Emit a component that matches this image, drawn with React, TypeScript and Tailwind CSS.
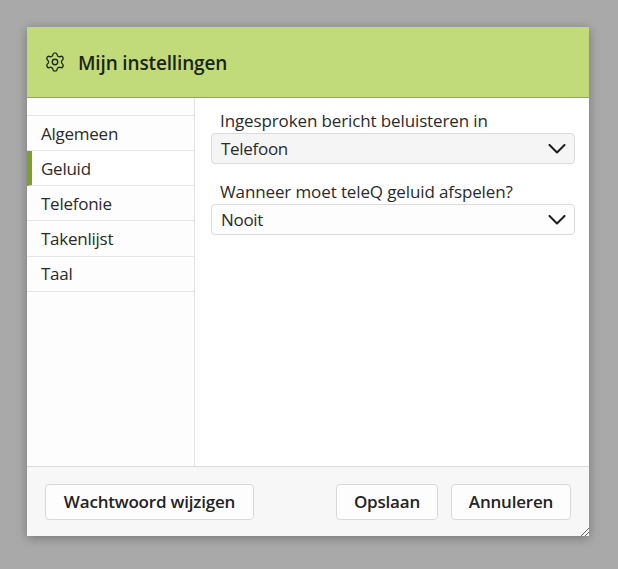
import React from 'react';
import { Settings } from 'lucide-react';

const tabs = ['Algemeen', 'Geluid', 'Telefonie', 'Takenlijst', 'Taal'];

function Field({ label, value, shaded }: { label: string; value: string; shaded?: boolean }) {
  return (
    <div>
      <div className="pl-[9px] h-[24px] leading-[24px] text-[17px] tracking-[-0.12px] text-[#2b2b2b]">{label}</div>
      <div
        className={`h-[31px] rounded-[4px] border border-[#dcdcdc] pl-[9px] pr-[8px] flex items-center justify-between text-[17px] tracking-[-0.3px] text-[#2b2b2b] ${
          shaded ? 'bg-[#f5f5f5]' : 'bg-[#fdfdfd]'
        }`}
      >
        <span>{value}</span>
        <svg className="w-[18px] h-[10px]" viewBox="0 0 18 10" fill="none" stroke="#1c1c1c" strokeWidth="2" strokeLinecap="round" strokeLinejoin="round">
          <path d="M1.5 1 L9 8.5 L16.5 1" />
        </svg>
      </div>
    </div>
  );
}

function FooterButton({ label, width }: { label: string; width: string }) {
  return (
    <button className={`${width} h-[36px] rounded-[4px] border border-[#d9d9d9] bg-[#fdfdfd] text-[17px] font-semibold tracking-[-0.2px] text-[#242424]`}>
      {label}
    </button>
  );
}

export default function App() {
  return (
    <div className="w-[618px] h-[569px] bg-[#a9a9a9] pt-[27px] pl-[27px] font-['Open_Sans','Noto_Sans',sans-serif]">
      <div className="relative w-[562px] h-[509px] flex flex-col bg-white shadow-[0_2px_10px_rgba(0,0,0,0.3)]">
        {/* Header */}
        <div className="h-[71px] shrink-0 bg-[#c1db7b] border-b border-[#8fa85a] flex items-center pl-[17px] gap-[12px]">
          <Settings className="w-[22px] h-[22px] text-[#1f2a14]" strokeWidth={1.5} />
          <span className="mt-[2px] text-[19px] font-semibold tracking-[-0.15px] text-[#1c2413]">Mijn instellingen</span>
        </div>

        <div className="flex-1 flex min-h-0">
          {/* Tabs */}
          <div className="w-[168px] shrink-0 bg-[#fdfdfd] border-r border-[#e3e3e3] pt-[17px]">
            <div className="border-t border-[#e6e6e6]">
              {tabs.map((tab) => (
                <div
                  key={tab}
                  className={`h-[35.15px] pt-[1px] flex items-center text-[17px] tracking-[-0.25px] text-[#2b2b2b] border-b ${
                    tab === 'Geluid'
                      ? 'bg-white border-[#e6e6e6] border-l-[5px] border-l-[#7da02f] pl-[9px]'
                      : 'border-[#e6e6e6] pl-[14px]'
                  }`}
                >
                  {tab}
                </div>
              ))}
            </div>
          </div>

          {/* Fields */}
          <div className="flex-1 pt-[11px] pl-[16px] pr-[14px] flex flex-col gap-[16px]">
            <Field label="Ingesproken bericht beluisteren in" value="Telefoon" shaded />
            <Field label="Wanneer moet teleQ geluid afspelen?" value="Nooit" />
          </div>
        </div>

        {/* Footer */}
        <div className="h-[70px] shrink-0 bg-[#f7f7f7] border-t border-[#dcdcdc] flex items-start justify-between pt-[17px] px-[18px]">
          <FooterButton label="Wachtwoord wijzigen" width="w-[209px]" />
          <div className="flex gap-[13px]">
            <FooterButton label="Opslaan" width="w-[102px]" />
            <FooterButton label="Annuleren" width="w-[120px]" />
          </div>
        </div>

        {/* Resize grip */}
        <svg className="absolute right-0 bottom-0 w-[10px] h-[10px]" viewBox="0 0 10 10" fill="none" stroke="#666" strokeWidth="1">
          <path d="M2 10 L10 2 M6 10 L10 6" />
        </svg>
      </div>
    </div>
  );
}
